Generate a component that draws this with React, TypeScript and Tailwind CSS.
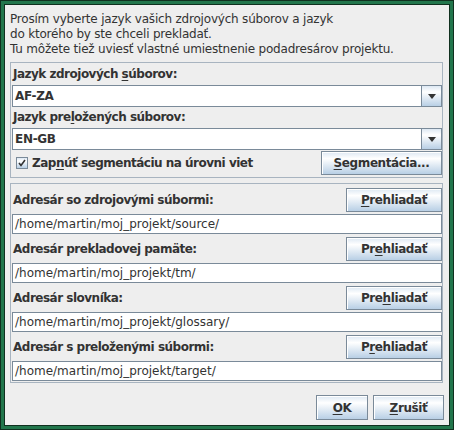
const labelCls = "font-['DejaVu_Sans',sans-serif] font-bold text-[12px] tracking-[-0.5px] text-[#333333]";

const btnCls =
  "flex items-center justify-center border border-[#7a8a99] bg-[linear-gradient(to_bottom,#dde8f3,#ffffff_30%,#b8cfe5)] shadow-[inset_1px_1px_0_#ffffff] font-['DejaVu_Sans',sans-serif] font-bold text-[12px] tracking-[-0.4px] text-[#333333]";

const Mn = ({ children }: { children: React.ReactNode }) => (
  <span className="underline underline-offset-[2px] decoration-1">{children}</span>
);

const Combo = ({ value }: { value: string }) => (
  <div className="flex h-[22px] w-[430px]">
    <div className="flex-1 flex items-center border border-[#7a8a99] bg-white pl-[2px] font-['DejaVu_Sans',sans-serif] font-bold text-[12px] tracking-[-0.3px] text-[#333333]">
      {value}
    </div>
    <div className="w-[20px] flex items-center justify-center border border-l-0 border-[#7a8a99] bg-[linear-gradient(to_bottom,#dde8f3,#ffffff_30%,#b8cfe5)]">
      <svg width="8" height="5" viewBox="0 0 8 5">
        <path d="M0 0h8L4 5z" fill="#333333" />
      </svg>
    </div>
  </div>
);

const dirs = [
  { label: "Adresár so zdrojovými súbormi:", pre: "", mn: "P", post: "rehliadať", path: "/home/martin/moj_projekt/source/" },
  { label: "Adresár prekladovej pamäte:", pre: "Pr", mn: "e", post: "hliadať", path: "/home/martin/moj_projekt/tm/" },
  { label: "Adresár slovníka:", pre: "Pre", mn: "h", post: "liadať", path: "/home/martin/moj_projekt/glossary/" },
  { label: "Adresár s preloženými súbormi:", pre: "P", mn: "r", post: "ehliadať", path: "/home/martin/moj_projekt/target/" },
];

export default function App() {
  return (
    <div className="w-[454px] h-[430px] bg-[#10301f] p-px">
      <div className="h-full bg-[#22764c] p-[3px]">
        <div className="h-full bg-[#10301f] p-px">
          <div className="h-full bg-[#eeeeee] flex flex-col pl-[5px] pt-[7px]">
            <div className="font-['DejaVu_Sans',sans-serif] text-[12px] leading-[15px] tracking-[-0.2px] text-[#333333]">
              <p>Prosím vyberte jazyk vašich zdrojových súborov a jazyk</p>
              <p>do ktorého by ste chceli prekladať.</p>
              <p>Tu môžete tiež uviesť vlastné umiestnenie podadresárov projektu.</p>
            </div>

            <div className="mt-[5px] w-[433px] border border-[#a8b4c0] pl-px pt-px pb-[2px] flex flex-col">
              <div className={`${labelCls} h-[21px] leading-[21px] pl-px`}>
                Jazyk zdrojových <Mn>s</Mn>úborov:
              </div>
              <Combo value="AF-ZA" />
              <div className={`${labelCls} h-[21px] leading-[21px] pl-px`}>
                Jazyk pre<Mn>l</Mn>ožených súborov:
              </div>
              <Combo value="EN-GB" />
              <div className="mt-px h-[24px] flex items-center w-[430px]">
                <div className="ml-[4px] w-[12px] h-[12px] border border-[#7a8a99] bg-[linear-gradient(to_bottom,#dde8f3,#ffffff_30%,#b8cfe5)] flex items-center justify-center">
                  <svg width="8" height="8" viewBox="0 0 8 8">
                    <path d="M1 4l2 2.5L7 1" stroke="#333333" strokeWidth="1.6" fill="none" />
                  </svg>
                </div>
                <span className={`${labelCls} ml-[4px]`}>
                  Zap<Mn>n</Mn>úť segmentáciu na úrovni viet
                </span>
                <div className={`${btnCls} ml-auto w-[121px] h-[24px]`}>
                  <Mn>S</Mn>egmentácia...
                </div>
              </div>
            </div>

            <div className="mt-[5px] w-[433px] border border-[#a8b4c0] pl-px pt-[4px] pb-px flex flex-col gap-[3px]">
              {dirs.map((d) => (
                <div key={d.label} className="flex flex-col gap-[2px] w-[430px]">
                  <div className="flex items-center h-[24px]">
                    <span className={`${labelCls} pl-px`}>{d.label}</span>
                    <div className={`${btnCls} ml-auto w-[96px] h-[24px]`}>
                      {d.pre}
                      <Mn>{d.mn}</Mn>
                      {d.post}
                    </div>
                  </div>
                  <div className="h-[20px] flex items-center border border-[#7a8a99] bg-white pl-[2px] font-['DejaVu_Sans',sans-serif] text-[12px] text-[#333333]">
                    {d.path}
                  </div>
                </div>
              ))}
            </div>

            <div className="mt-[12px] flex justify-end gap-[5px] pr-[5px]">
              <div className={`${btnCls} w-[52px] h-[25px]`}>
                <Mn>O</Mn>K
              </div>
              <div className={`${btnCls} w-[71px] h-[25px]`}>
                <Mn>Z</Mn>rušiť
              </div>
            </div>
          </div>
        </div>
      </div>
    </div>
  );
}
